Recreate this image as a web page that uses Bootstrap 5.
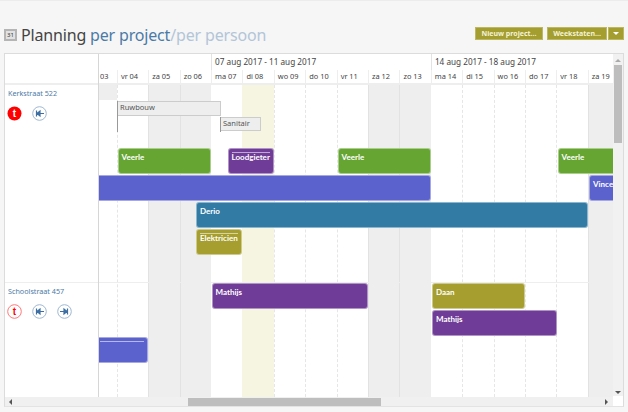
<!DOCTYPE html>
<html lang="nl"><head><meta charset="utf-8">
<link href="https://cdn.jsdelivr.net/npm/bootstrap@5.3.0/dist/css/bootstrap.min.css" rel="stylesheet">
<script src="https://cdn.jsdelivr.net/npm/bootstrap@5.3.0/dist/js/bootstrap.bundle.min.js"></script>
<style>
html,body{height:412px;overflow:hidden}
body{background:#f6f6f6;font-family:"Noto Sans",sans-serif;color:#444;border-top:1px solid #ececec}
.page-head{height:52px;padding:0 4px}
.cal-ico{width:13px;height:12px;background:#e2e2e2;border:2px solid #b5b5b5;font-size:6px;line-height:8px;text-align:center;color:#333;margin-right:4px}
.title-main{font:16px/20px "Noto Sans",sans-serif;color:#444;letter-spacing:-.17px}
.title-main .on{color:#4c7aa6}.title-main .off{color:#b3c5d8}
.olive-btn{background:#a49d2f;color:#f5f3d5;border:1px solid #bdb75e;border-radius:0;font:bold 7px/11px "Noto Sans",sans-serif;height:13px;padding:0;white-space:nowrap}
.olive-btn:hover{background:#a49d2f;color:#f5f3d5}
.btn-new{width:68px;margin-right:4px}.btn-week{width:60px;margin-right:1px}.btn-more{width:16px}
.caret-mini{display:block;width:0;height:0;margin:0 auto;border:3px solid transparent;border-top-color:#fff;border-bottom:0}
.panel-wrap{width:620px;height:354px;margin-left:4px;background:#fff;border:1px solid #dcdcdc;border-bottom-color:#e3e3e3}
.main-row{height:343px}
.left-col{width:94px;border-right:1px solid #d6d6d6;flex:none}
.left-head{height:31px;border-bottom:2px solid #eee}
.proj-cell{font:7.2px/12px "Noto Sans",sans-serif;color:#4c7aa6;padding:2px 3px 0}
.proj-one{height:198px;border-bottom:1px solid #eee}
.ico-row{margin:7px 0 0 -1px;gap:10px}
.ico-row svg{display:block}
.time-col{width:514px;flex:none;overflow:hidden;position:relative}
.week-row{height:16px;margin-left:-13.5px}
.wk{font:8.2px/16px "Noto Sans",sans-serif;color:#444;padding-left:3px;height:16px;flex:none;white-space:nowrap;border-left:1px solid #e3e3e3}
.wk-blank{width:125.6px;border:0}.wk-a{width:219.8px}.wk-b{width:200px}
.day-row{height:13px;margin-left:-13.5px}
.dy{width:31.4px;flex:none;font:7.4px/13px "Noto Sans",sans-serif;color:#444;padding-left:3px;border-left:1px solid #eee;white-space:nowrap}
.dy.first{border:0;padding-left:14.5px}
.sep2{height:2px;background:#eee}
.canvas{position:relative;height:312px;overflow:hidden}
.stripes{position:absolute;inset:0 0 0 -13.5px;display:flex}
.st{width:31.4px;flex:none;border-left:1px dashed #e6e6e6;height:100%}
.st.we{background:#eee;border-left:1px solid #e2e2e2}
.st.mon{border-left:0}
.st.sel{background:#f6f5e2;border-left:0}
.rowline{position:absolute;left:0;right:0;top:197px;height:1px;background:#eee}
.topgrey{position:absolute;left:0;top:0;width:18px;height:15px;background:#eee}
.bar{position:absolute;height:26px;border-radius:3px;color:#fff;font:bold 8px/1 Lato,sans-serif;padding:4px 3px;white-space:nowrap;overflow:hidden;border:1px solid rgba(255,255,255,.45)}
.g{background:#66a532}.p{background:#6f3c97}.b{background:#5b62cd}.t{background:#317ba5}.o{background:#a69e2f}
.bar.ln::before{content:"";position:absolute;left:3px;right:3px;top:3px;height:1px;background:rgba(255,255,255,.55)}
.ph{position:absolute;background:#eee;border:1px solid #ccc;border-left:1px solid #999;font:7.5px/1 "Noto Sans",sans-serif;color:#555;padding:2px;white-space:nowrap}
.tick{position:absolute;width:1px;background:#999}
.vbar{width:10px;flex:none;background:#f1f1f1;position:relative}
.vthumb{position:absolute;left:1px;right:1px;top:11px;height:78px;background:#bdbdbd}
.arr{position:absolute;width:0;height:0;border:3px solid transparent}
.hbar{height:10px;background:#f0f0f0;position:relative}
.hthumb{position:absolute;left:183px;top:1px;height:8px;width:193px;background:#bebebe}
.corner{position:absolute;right:0;bottom:0;width:10px;height:10px;background:#fff}
</style></head><body>
<div class="page-head d-flex align-items-start justify-content-between">
 <div class="d-flex align-items-center" style="margin-top:24px"><div class="cal-ico">31</div><div class="title-main">Planning <span class="on">per project</span><span class="off">/per persoon</span></div></div>
 <div class="d-flex" style="margin-top:26px"><button class="btn olive-btn btn-new">Nieuw project...</button><button class="btn olive-btn btn-week">Weekstaten...</button><button class="btn olive-btn btn-more"><span class="caret-mini"></span></button></div>
</div>
<div class="panel-wrap d-flex flex-column position-relative">
<div class="d-flex main-row">
 <div class="left-col">
  <div class="left-head"></div>
  <div class="proj-cell proj-one">Kerkstraat 522
   <div class="d-flex ico-row">
    <svg width="15" height="15" viewBox="0 0 15 15"><circle cx="7.5" cy="7.5" r="7" fill="#f00"/><text x="7.5" y="11" fill="#fff" font-size="10" font-weight="700" text-anchor="middle" font-family="Liberation Sans">t</text></svg>
    <svg width="15" height="15" viewBox="0 0 15 15"><circle cx="7.5" cy="7.5" r="6.8" fill="#fff" stroke="#9db8d2"/><path d="M4.5 4.5v6M12 7.5H5M5 7.5l3-2.5v5z" stroke="#3d6fa3" stroke-width="1.2" fill="#3d6fa3"/></svg>
   </div>
  </div>
  <div class="proj-cell">Schoolstraat 457
   <div class="d-flex ico-row">
    <svg width="15" height="15" viewBox="0 0 15 15"><circle cx="7.5" cy="7.5" r="6.8" fill="#fff" stroke="#f77"/><text x="7.5" y="11" fill="#f00" font-size="10" font-weight="700" text-anchor="middle" font-family="Liberation Sans">t</text></svg>
    <svg width="15" height="15" viewBox="0 0 15 15"><circle cx="7.5" cy="7.5" r="6.8" fill="#fff" stroke="#9db8d2"/><path d="M4.5 4.5v6M12 7.5H5M5 7.5l3-2.5v5z" stroke="#3d6fa3" stroke-width="1.2" fill="#3d6fa3"/></svg>
    <svg width="15" height="15" viewBox="0 0 15 15"><circle cx="7.5" cy="7.5" r="6.8" fill="#fff" stroke="#9db8d2"/><path d="M10.5 4.5v6M3 7.5h7M10 7.5L7 5v5z" stroke="#3d6fa3" stroke-width="1.2" fill="#3d6fa3"/></svg>
   </div>
  </div>
 </div>
 <div class="time-col">
  <div class="d-flex week-row">
   <div class="wk wk-blank"></div>
   <div class="wk wk-a">07 aug 2017 - 11 aug 2017</div>
   <div class="wk wk-b">14 aug 2017 - 18 aug 2017</div>
  </div>
  <div class="d-flex day-row">
   <div class="dy first">03</div><div class="dy">vr 04</div><div class="dy">za 05</div><div class="dy">zo 06</div><div class="dy">ma 07</div><div class="dy">di 08</div><div class="dy">wo 09</div><div class="dy">do 10</div><div class="dy">vr 11</div><div class="dy">za 12</div><div class="dy">zo 13</div><div class="dy">ma 14</div><div class="dy">di 15</div><div class="dy">wo 16</div><div class="dy">do 17</div><div class="dy">vr 18</div><div class="dy">za 19</div>
  </div>
  <div class="sep2"></div>
  <div class="canvas">
   <div class="stripes">
    <div class="st"></div><div class="st"></div><div class="st we"></div><div class="st we"></div><div class="st mon"></div><div class="st sel"></div><div class="st"></div><div class="st"></div><div class="st"></div><div class="st we"></div><div class="st we"></div><div class="st mon"></div><div class="st"></div><div class="st"></div><div class="st"></div><div class="st"></div><div class="st we"></div>
   </div>
   <div class="rowline"></div>
   <div class="topgrey"></div>
   <div class="ph" style="left:18px;top:16px;width:104px;height:15px">Ruwbouw</div><div class="tick" style="left:18px;top:16px;height:31px"></div>
   <div class="ph" style="left:121px;top:32px;width:41px;height:14px">Sanitair</div><div class="tick" style="left:121px;top:32px;height:15px"></div>
   <div class="bar g" style="left:18.5px;top:63px;width:93px">Veerle</div>
   <div class="bar p ln" style="left:128.5px;top:63px;width:46px">Loodgieter</div>
   <div class="bar g" style="left:238.5px;top:63px;width:93px">Veerle</div>
   <div class="bar g" style="left:458.5px;top:63px;width:60px">Veerle</div>
   <div class="bar b" style="left:-3px;top:90px;width:334.5px"></div>
   <div class="bar b" style="left:490px;top:90px;width:40px">Vince</div>
   <div class="bar t" style="left:97px;top:117px;width:392px">Derio</div>
   <div class="bar o ln" style="left:97px;top:144px;width:46px">Elektricien</div>
   <div class="bar p" style="left:112.5px;top:198px;width:156px">Mathijs</div>
   <div class="bar o" style="left:333px;top:198px;width:93px">Daan</div>
   <div class="bar p" style="left:333px;top:225px;width:125px">Mathijs</div>
   <div class="bar b ln" style="left:-3px;top:252px;width:52px"></div>
  </div>
 </div>
 <div class="vbar">
  <div class="arr" style="left:2px;top:2px;border-bottom-color:#aaa"></div>
  <div class="vthumb"></div>
  <div class="arr" style="left:2px;bottom:0;border-top-color:#555"></div>
 </div>
</div>
 <div class="hbar"><div class="hthumb"></div>
  <div class="arr" style="left:1px;top:2px;border-right-color:#555"></div>
  <div class="arr" style="right:12px;top:2px;border-left-color:#555"></div>
  <div class="corner"></div></div>
</div>
</body></html>
